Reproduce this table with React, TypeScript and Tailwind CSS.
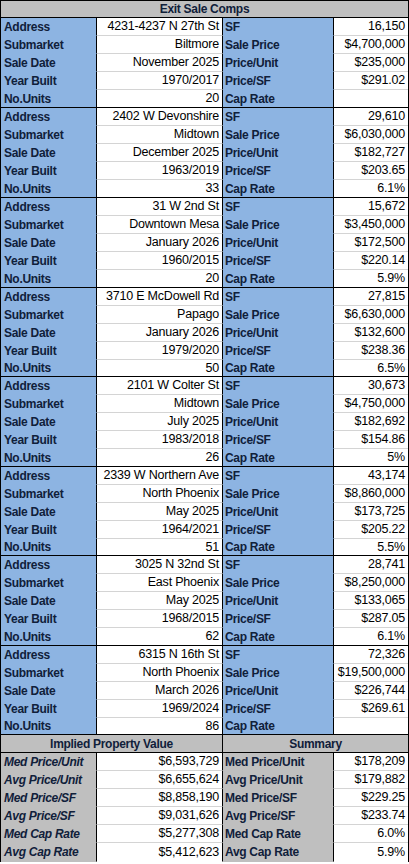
import React from "react"

type Comp = {
  address: string
  submarket: string
  saleDate: string
  yearBuilt: string
  units: string
  sf: string
  salePrice: string
  pricePerUnit: string
  pricePerSf: string
  capRate: string
  short?: boolean
}

const comps: Comp[] = [
  { address: "4231-4237 N 27th St", submarket: "Biltmore", saleDate: "November 2025", yearBuilt: "1970/2017", units: "20", sf: "16,150", salePrice: "$4,700,000", pricePerUnit: "$235,000", pricePerSf: "$291.02", capRate: "" },
  { address: "2402 W Devonshire", submarket: "Midtown", saleDate: "December 2025", yearBuilt: "1963/2019", units: "33", sf: "29,610", salePrice: "$6,030,000", pricePerUnit: "$182,727", pricePerSf: "$203.65", capRate: "6.1%" },
  { address: "31 W 2nd St", submarket: "Downtown Mesa", saleDate: "January 2026", yearBuilt: "1960/2015", units: "20", sf: "15,672", salePrice: "$3,450,000", pricePerUnit: "$172,500", pricePerSf: "$220.14", capRate: "5.9%" },
  { address: "3710 E McDowell Rd", submarket: "Papago", saleDate: "January 2026", yearBuilt: "1979/2020", units: "50", sf: "27,815", salePrice: "$6,630,000", pricePerUnit: "$132,600", pricePerSf: "$238.36", capRate: "6.5%", short: true },
  { address: "2101 W Colter St", submarket: "Midtown", saleDate: "July 2025", yearBuilt: "1983/2018", units: "26", sf: "30,673", salePrice: "$4,750,000", pricePerUnit: "$182,692", pricePerSf: "$154.86", capRate: "5%" },
  { address: "2339 W Northern Ave", submarket: "North Phoenix", saleDate: "May 2025", yearBuilt: "1964/2021", units: "51", sf: "43,174", salePrice: "$8,860,000", pricePerUnit: "$173,725", pricePerSf: "$205.22", capRate: "5.5%", short: true },
  { address: "3025 N 32nd St", submarket: "East Phoenix", saleDate: "May 2025", yearBuilt: "1968/2015", units: "62", sf: "28,741", salePrice: "$8,250,000", pricePerUnit: "$133,065", pricePerSf: "$287.05", capRate: "6.1%" },
  { address: "6315 N 16th St", submarket: "North Phoenix", saleDate: "March 2026", yearBuilt: "1969/2024", units: "86", sf: "72,326", salePrice: "$19,500,000", pricePerUnit: "$226,744", pricePerSf: "$269.61", capRate: "", short: true },
]

const implied = [
  ["Med Price/Unit", "$6,593,729", "Med Price/Unit", "$178,209"],
  ["Avg Price/Unit", "$6,655,624", "Avg Price/Unit", "$179,882"],
  ["Med Price/SF", "$8,858,190", "Med Price/SF", "$229.25"],
  ["Avg Price/SF", "$9,031,626", "Avg Price/SF", "$233.74"],
  ["Med Cap Rate", "$5,277,308", "Med Cap Rate", "6.0%"],
  ["Avg Cap Rate", "$5,412,623", "Avg Cap Rate", "5.9%"],
]

const cols = "grid grid-cols-[96px_126px_111px_1fr]"
const label = "font-bold text-[#10203a] text-[12px] tracking-[-0.3px]"
const value = "text-[12.5px] tracking-[-0.2px]"

function Row({ cells, last, height }: { cells: [string, string, string, string]; last: boolean; height: string }) {
  const line = last ? "border-b-black" : "border-b-transparent"
  const valLine = last ? "border-b-black" : "border-b-[#d4d4d4]"
  return (
    <div className={`${cols} ${height}`}>
      <div className={`flex items-center border-r border-b border-r-black ${line} bg-[#8db4e2] pl-[3px] ${label}`}>{cells[0]}</div>
      <div className={`flex items-center justify-end border-r border-b border-r-black ${valLine} pr-[3px] ${value}`}>{cells[1]}</div>
      <div className={`flex items-center border-r border-b border-r-black ${line} bg-[#8db4e2] pl-[2px] ${label}`}>{cells[2]}</div>
      <div className={`flex items-center justify-end border-b ${valLine} pr-[3px] ${value}`}>{cells[3]}</div>
    </div>
  )
}

export default function App() {
  return (
    <div className="w-[409px] bg-white font-['Liberation_Sans',Arial,sans-serif] leading-none text-black">
      <div className="border border-black border-b-0">
        {/* Title */}
        <div className={`flex h-[17px] items-center justify-center border-b border-black bg-[#bfbfbf] ${label}`}>
          Exit Sale Comps
        </div>

        {/* Comps */}
        {comps.map((c, i) => {
          const rows: [string, string, string, string][] = [
            ["Address", c.address, "SF", c.sf],
            ["Submarket", c.submarket, "Sale Price", c.salePrice],
            ["Sale Date", c.saleDate, "Price/Unit", c.pricePerUnit],
            ["Year Built", c.yearBuilt, "Price/SF", c.pricePerSf],
            ["No.Units", c.units, "Cap Rate", c.capRate],
          ]
          return (
            <div key={i}>
              {rows.map((r, j) => (
                <Row key={j} cells={r} last={j === 4} height={j === 4 && c.short ? "h-[17px]" : "h-[18px]"} />
              ))}
            </div>
          )
        })}

        {/* Summary header */}
        <div className={`grid h-[18px] grid-cols-[222px_1fr] border-b border-black bg-[#bfbfbf] ${label}`}>
          <div className="flex items-center justify-center border-r border-black">Implied Property Value</div>
          <div className="flex items-center justify-center">Summary</div>
        </div>

        {/* Summary rows */}
        {implied.map((r, i) => {
          const last = i === implied.length - 1
          const line = last ? "border-b-transparent" : "border-b-[#d4d4d4]"
          return (
            <div key={i} className={`${cols} ${last ? "h-[19px]" : "h-[18px]"}`}>
              <div className={`flex items-center border-r border-b border-r-black border-b-transparent bg-[#bfbfbf] pl-[3px] italic ${label}`}>{r[0]}</div>
              <div className={`flex items-center justify-end border-r border-b border-r-black ${line} pr-[3px] ${value}`}>{r[1]}</div>
              <div className={`flex items-center border-r border-b border-r-black border-b-transparent bg-[#bfbfbf] pl-[2px] ${label}`}>{r[2]}</div>
              <div className={`flex items-center justify-end border-b ${line} pr-[3px] ${value}`}>{r[3]}</div>
            </div>
          )
        })}
      </div>
    </div>
  )
}
